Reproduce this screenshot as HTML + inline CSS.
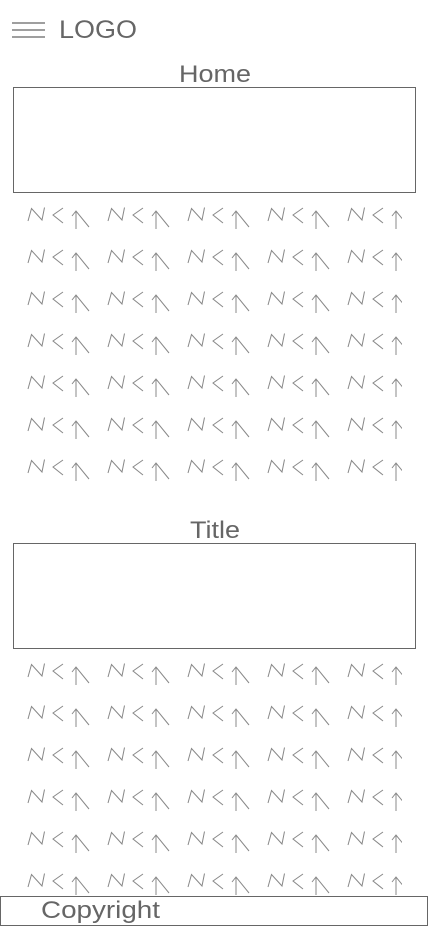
<!DOCTYPE html><html><head><style>body{margin:0;background:#fff;overflow:hidden}svg{display:block}</style></head><body>
<svg width="428" height="926" xmlns="http://www.w3.org/2000/svg" font-family="Liberation Sans, sans-serif">
<defs>
<g id="g" fill="none" stroke="#888" stroke-width="1">
<path d="M28,221 L31.5,208.5 L42,220 L44.5,207.5"/>
<path d="M63,208 L53,215 L63,223"/>
<path d="M72,216 L76,211 L89,227 M76,211 L76,229"/>
</g>
<g id="row"><use href="#g"/><use href="#g" x="80"/><use href="#g" x="160"/><use href="#g" x="240"/><use href="#g" x="320"/></g>
<clipPath id="c"><rect x="0" y="0" width="402" height="926"/></clipPath>
</defs>
<g stroke="#666" stroke-width="1.2"><line x1="12" y1="23" x2="45" y2="23"/><line x1="12" y1="30" x2="45" y2="30"/><line x1="12" y1="37" x2="45" y2="37"/></g>
<text x="59" y="38" font-size="25" fill="#666" textLength="78" lengthAdjust="spacingAndGlyphs">LOGO</text>
<text x="179" y="82" font-size="24" fill="#666" textLength="72" lengthAdjust="spacingAndGlyphs">Home</text>
<rect x="13.5" y="87.5" width="402" height="105" fill="none" stroke="#666"/>
<g clip-path="url(#c)">
<use href="#row"/><use href="#row" y="42"/><use href="#row" y="84"/><use href="#row" y="126"/><use href="#row" y="168"/><use href="#row" y="210"/><use href="#row" y="252"/>
<use href="#row" y="456"/><use href="#row" y="498"/><use href="#row" y="540"/><use href="#row" y="582"/><use href="#row" y="624"/><use href="#row" y="666"/>
</g>
<text x="190" y="538" font-size="24" fill="#666" textLength="50" lengthAdjust="spacingAndGlyphs">Title</text>
<rect x="13.5" y="543.5" width="402" height="105" fill="none" stroke="#666"/>
<rect x="0.5" y="896.5" width="427" height="29" fill="#fff" stroke="#666"/>
<text x="41" y="918" font-size="24" fill="#666" textLength="119" lengthAdjust="spacingAndGlyphs">Copyright</text>
</svg>
</body></html>
